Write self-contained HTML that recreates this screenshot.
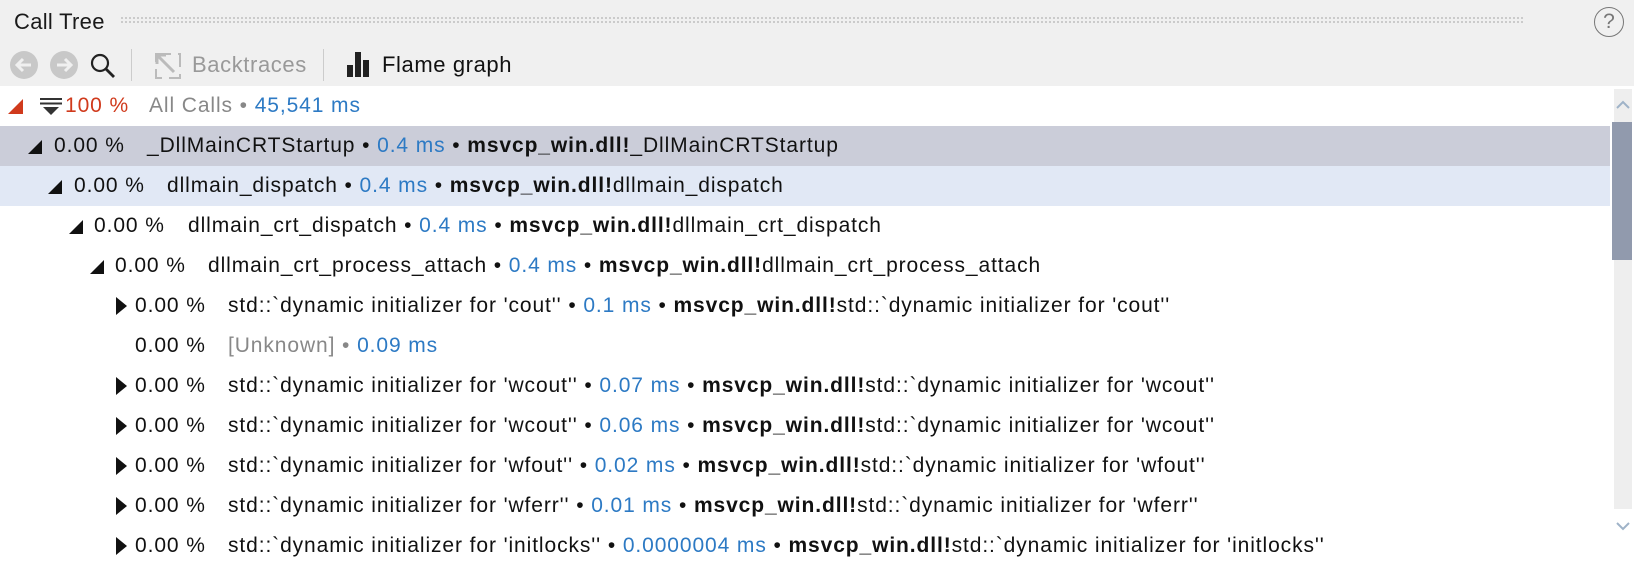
<!DOCTYPE html>
<html><head><style>
body{margin:0;width:1634px;height:544px;overflow:hidden;background:#fff;font-family:"Liberation Sans",sans-serif;font-size:21px;letter-spacing:0.9px;color:#111;position:relative}
.top{position:absolute;left:0;top:0;width:1634px;height:86px;background:#f0f0f0}
.title{position:absolute;left:14px;top:9px;font-size:22px;letter-spacing:0.3px;color:#1a1a1a}
.dots{position:absolute;left:120px;top:16px;width:1405px;height:8px;background-image:radial-gradient(circle,#c8c8c8 1px,transparent 1.2px);background-size:4px 4px}
.help{position:absolute;left:1594px;top:7px;width:30px;height:30px;border:1.5px solid #777;border-radius:50%;box-sizing:border-box;text-align:center;font-size:21px;line-height:27px;color:#777;letter-spacing:0}
.tb{position:absolute;top:52px;font-size:22px;letter-spacing:0.6px}
.sep{position:absolute;top:49px;width:1px;height:32px;background:#ccc}
.row{position:absolute;left:0;width:1610px;height:40px;line-height:40px;white-space:nowrap}
.row>span{position:absolute}
.b{color:#2d7ac4;font-weight:normal}
.g{color:#888}
.down{width:0;height:0;border-left:14px solid transparent;border-bottom:14px solid #111;top:14px}
.right{width:0;height:0;border-top:9px solid transparent;border-bottom:9px solid #111;border-left:11px solid #111;border-bottom-color:transparent;top:11px}
</style></head><body>
<div class="top">
<div class="title">Call Tree</div>
<div class="dots"></div>
<div class="help">?</div>
<svg style="position:absolute;left:10px;top:51px" width="80" height="28">
<circle cx="14" cy="14" r="14" fill="#c8c8c8"/><path d="M21 14H8M13 8L7 14L13 20" stroke="#f0f0f0" stroke-width="3" fill="none"/>
<circle cx="54" cy="14" r="14" fill="#c8c8c8"/><path d="M47 14H60M55 8L61 14L55 20" stroke="#f0f0f0" stroke-width="3" fill="none"/>
</svg>
<svg style="position:absolute;left:89px;top:52px" width="28" height="28"><circle cx="11" cy="11" r="8" stroke="#222" stroke-width="2.2" fill="none"/><path d="M17 17L25 25" stroke="#222" stroke-width="2.8"/></svg>
<div class="sep" style="left:131px"></div>
<svg style="position:absolute;left:153px;top:51px" width="30" height="30"><rect x="3" y="3" width="24" height="24" fill="none" stroke="#bbb" stroke-width="2" stroke-dasharray="15 7"/><path d="M4 4L21 21M4 4h9M4 4v9" stroke="#bbb" stroke-width="3" fill="none"/></svg>
<div class="tb" style="left:192px;color:#999">Backtraces</div>
<div class="sep" style="left:323px"></div>
<svg style="position:absolute;left:347px;top:52px" width="26" height="26"><rect x="0" y="13" width="6" height="12" fill="#222"/><rect x="8" y="0" width="6" height="25" fill="#222"/><rect x="16" y="8" width="6" height="17" fill="#222"/></svg>
<div class="tb" style="left:382px;color:#111">Flame graph</div>
</div>

<div class="row" style="top:86px">
<span style="left:8px;top:13px;width:0;height:0;border-left:15px solid transparent;border-bottom:15px solid #d03a1c"></span>
<svg style="position:absolute;left:40px;top:12px" width="22" height="18"><path d="M0 1h22M0 5.5h22" stroke="#333" stroke-width="2"/><path d="M3 9h16l-8 8z" fill="#333"/></svg>
<span style="left:65px;color:#d03a1c">100 %</span>
<span style="left:149px"><span class="g">All Calls •</span> <span class="b">45,541 ms</span></span>
</div>

<div class="row" style="top:126px;background:#cbcdd9">
<span class="down" style="left:28px"></span><span style="left:54px">0.00 %</span>
<span style="left:147px">_DllMainCRTStartup • <b class="b">0.4 ms</b> • <b>msvcp_win.dll!</b>_DllMainCRTStartup</span></div>
<div class="row" style="top:166px;background:#e1e8f5">
<span class="down" style="left:48px"></span><span style="left:74px">0.00 %</span>
<span style="left:167px">dllmain_dispatch • <b class="b">0.4 ms</b> • <b>msvcp_win.dll!</b>dllmain_dispatch</span></div>
<div class="row" style="top:206px">
<span class="down" style="left:69px"></span><span style="left:94px">0.00 %</span>
<span style="left:188px">dllmain_crt_dispatch • <b class="b">0.4 ms</b> • <b>msvcp_win.dll!</b>dllmain_crt_dispatch</span></div>
<div class="row" style="top:246px">
<span class="down" style="left:90px"></span><span style="left:115px">0.00 %</span>
<span style="left:208px">dllmain_crt_process_attach • <b class="b">0.4 ms</b> • <b>msvcp_win.dll!</b>dllmain_crt_process_attach</span></div>
<div class="row" style="top:286px">
<span class="right" style="left:116px"></span><span style="left:135px">0.00 %</span>
<span style="left:228px">std::`dynamic initializer for 'cout'' • <b class="b">0.1 ms</b> • <b>msvcp_win.dll!</b>std::`dynamic initializer for 'cout''</span></div>
<div class="row" style="top:326px">
<span style="left:135px">0.00 %</span>
<span style="left:228px"><span class="g">[Unknown] •</span> <b class="b">0.09 ms</b></span></div>
<div class="row" style="top:366px">
<span class="right" style="left:116px"></span><span style="left:135px">0.00 %</span>
<span style="left:228px">std::`dynamic initializer for 'wcout'' • <b class="b">0.07 ms</b> • <b>msvcp_win.dll!</b>std::`dynamic initializer for 'wcout''</span></div>
<div class="row" style="top:406px">
<span class="right" style="left:116px"></span><span style="left:135px">0.00 %</span>
<span style="left:228px">std::`dynamic initializer for 'wcout'' • <b class="b">0.06 ms</b> • <b>msvcp_win.dll!</b>std::`dynamic initializer for 'wcout''</span></div>
<div class="row" style="top:446px">
<span class="right" style="left:116px"></span><span style="left:135px">0.00 %</span>
<span style="left:228px">std::`dynamic initializer for 'wfout'' • <b class="b">0.02 ms</b> • <b>msvcp_win.dll!</b>std::`dynamic initializer for 'wfout''</span></div>
<div class="row" style="top:486px">
<span class="right" style="left:116px"></span><span style="left:135px">0.00 %</span>
<span style="left:228px">std::`dynamic initializer for 'wferr'' • <b class="b">0.01 ms</b> • <b>msvcp_win.dll!</b>std::`dynamic initializer for 'wferr''</span></div>
<div class="row" style="top:526px">
<span class="right" style="left:116px"></span><span style="left:135px">0.00 %</span>
<span style="left:228px">std::`dynamic initializer for 'initlocks'' • <b class="b">0.0000004 ms</b> • <b>msvcp_win.dll!</b>std::`dynamic initializer for 'initlocks''</span></div>

<div style="position:absolute;left:1614px;top:89px;width:18px;height:455px;background:#eee"></div>
<svg style="position:absolute;left:1615px;top:99px" width="16" height="12"><path d="M2 9L8 3L14 9" stroke="#9fb3c8" stroke-width="2" fill="none"/></svg>
<div style="position:absolute;left:1612px;top:122px;width:20px;height:138px;background:#919aad"></div>
<div style="position:absolute;left:1612px;top:509px;width:20px;height:35px;background:#fff"></div>
<svg style="position:absolute;left:1615px;top:520px" width="16" height="12"><path d="M2 3L8 9L14 3" stroke="#9fb3c8" stroke-width="2" fill="none"/></svg>
</body></html>
